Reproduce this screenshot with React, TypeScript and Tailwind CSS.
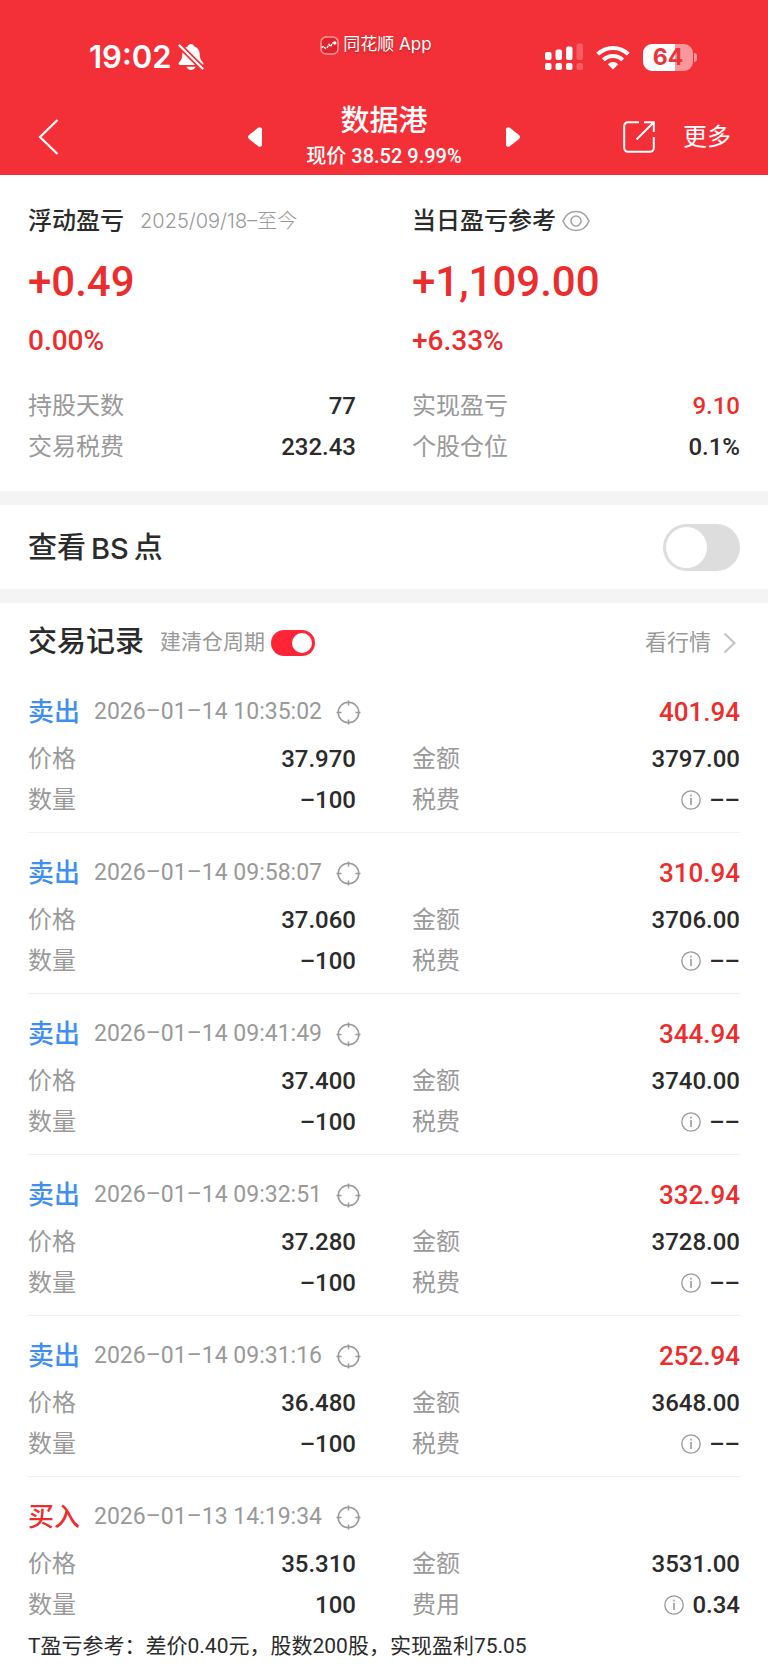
import { useState } from "react";

type Trade = {
  side: "sell" | "buy";
  time: string;
  profit?: string;
  price: string;
  qty: string;
  amount: string;
  feeLabel: string;
  fee: string;
};

const trades: Trade[] = [
  { side: "sell", time: "2026–01–14 10:35:02", profit: "401.94", price: "37.970", qty: "–100", amount: "3797.00", feeLabel: "税费", fee: "––" },
  { side: "sell", time: "2026–01–14 09:58:07", profit: "310.94", price: "37.060", qty: "–100", amount: "3706.00", feeLabel: "税费", fee: "––" },
  { side: "sell", time: "2026–01–14 09:41:49", profit: "344.94", price: "37.400", qty: "–100", amount: "3740.00", feeLabel: "税费", fee: "––" },
  { side: "sell", time: "2026–01–14 09:32:51", profit: "332.94", price: "37.280", qty: "–100", amount: "3728.00", feeLabel: "税费", fee: "––" },
  { side: "sell", time: "2026–01–14 09:31:16", profit: "252.94", price: "36.480", qty: "–100", amount: "3648.00", feeLabel: "税费", fee: "––" },
  { side: "buy", time: "2026–01–13 14:19:34", price: "35.310", qty: "100", amount: "3531.00", feeLabel: "费用", fee: "0.34" },
];

function BellOffIcon() {
  return (
    <svg width="26" height="28" viewBox="0 0 26 28" fill="none">
      <path d="M13 1c-1.600 0-2.700 1-3 2.200C6.200 4.400 4.300 7.300 4.300 11c0 4-.9 6-3.300 8.400-.8 1-.3 2.600 1.100 2.600h21.800c1.400 0 1.900-1.600 1.100-2.600-2.400-2.400-3.300-4.400-3.300-8.400 0-3.700-1.900-6.600-5.700-7.800C15.700 2 14.600 1 13 1z" fill="#fff" />
      <path d="M8.500 23.800h9c-.5 2-2.300 3.200-4.500 3.200s-4-1.200-4.500-3.200z" fill="#fff" />
      <path d="M0 1l26 26" stroke="#f33038" strokeWidth="5.500" />
      <path d="M1.500 2.500l23 23" stroke="#fff" strokeWidth="2.200" strokeLinecap="round" />
    </svg>
  );
}

function SignalIcon() {
  return (
    <svg width="38" height="28" viewBox="0 0 38 28" fill="#fff">
      <rect x="0" y="9" width="6.500" height="8" rx="2" />
      <rect x="10.500" y="6.500" width="6.500" height="10.500" rx="2" />
      <rect x="21" y="3.500" width="6.500" height="13.500" rx="2" />
      <rect x="31.500" y="0.500" width="6.500" height="16.500" rx="2" opacity=".22" />
      <rect x="0" y="20" width="6.500" height="7" rx="2" />
      <rect x="10.500" y="20" width="6.500" height="7" rx="2" />
      <rect x="21" y="20" width="6.500" height="7" rx="2" />
      <rect x="31.500" y="20" width="6.500" height="7" rx="2" opacity=".22" />
    </svg>
  );
}

function WifiIcon() {
  return (
    <svg width="34" height="25" viewBox="0 0 34 25" fill="none" stroke="#fff" strokeWidth="4">
      <path d="M1.700 9.200a21.800 21.800 0 0 1 30.600 0" />
      <path d="M7.300 14.900a13.800 13.800 0 0 1 19.400 0" />
      <path d="M17 24.500l-5.200-5.300a7.400 7.400 0 0 1 10.400 0z" fill="#fff" stroke="none" />
    </svg>
  );
}

function Battery() {
  return (
    <div className="flex items-center gap-px">
      <div className="flex h-[27px] w-[50px] items-center justify-center rounded-[9px] bg-linear-to-r from-white from-64% to-[#f9979b] to-64% font-[Inter,sans-serif] text-[23px] font-bold text-[#e9363d]">
        64
      </div>
      <div className="h-[9px] w-[3px] rounded-r-full bg-[#f9979b]" />
    </div>
  );
}

function AppBadgeIcon() {
  return (
    <svg width="19" height="19" viewBox="0 0 19 19" fill="none">
      <rect x="1" y="1" width="17" height="17" rx="5" fill="#e1222c" stroke="#f8979b" strokeWidth="1.500" />
      <path d="M1.500 11.500l2-1 2 2 2-1.500 1.500-2.500 1.500 2L12 8l1.500-1.500" stroke="#fff" strokeWidth="1.400" strokeDasharray="2.500 .8" />
      <circle cx="14.800" cy="7" r="1.700" fill="#fff" />
    </svg>
  );
}

function TargetIcon() {
  return (
    <svg width="25" height="25" viewBox="0 0 25 25" fill="none" stroke="#999" strokeWidth="1.500">
      <circle cx="12.500" cy="12.500" r="10.300" />
      <path d="M12.500 0.500v5M12.500 19.500v5M0.500 12.500h5M19.500 12.500h5" />
    </svg>
  );
}

function InfoIcon() {
  return (
    <svg width="20" height="20" viewBox="0 0 20 20" fill="none" stroke="#999" strokeWidth="1.300">
      <circle cx="10" cy="10" r="9.200" />
      <path d="M10 8v7" strokeWidth="1.600" />
      <path d="M10 4.800v1.800" strokeWidth="1.600" />
    </svg>
  );
}

function EyeIcon() {
  return (
    <svg width="28" height="22" viewBox="0 0 28 22" fill="none" stroke="#a3a3a3" strokeWidth="1.600">
      <path d="M1 11C3.500 5 8.300 1.500 14 1.500S24.500 5 27 11c-2.500 6-7.300 9.500-13 9.500S3.500 17 1 11z" />
      <circle cx="14" cy="11" r="5" />
    </svg>
  );
}

function Row({ label, value, red, info }: { label: string; value: string; red?: boolean; info?: boolean }) {
  return (
    <div className="flex h-[41px] items-center justify-between">
      <dt className="text-[#999]">{label}</dt>
      <dd className={red ? "font-medium text-[#eb2d2d]" : "flex items-center gap-2 font-medium text-[#2b2b2b]"}>
        {info && <InfoIcon />}
        {value}
      </dd>
    </div>
  );
}

function TradeItem({ trade }: { trade: Trade }) {
  return (
    <li className="border-b border-[#f0f0f0] pt-[14px] pb-3 last:border-b-0 last:pb-0">
      <div className="flex h-[52px] items-center">
        <span className={trade.side === "sell" ? "text-[26px] font-medium text-[#3f8ff0]" : "text-[26px] font-medium text-[#eb2d2d]"}>
          {trade.side === "sell" ? "卖出" : "买入"}
        </span>
        <time className="ml-[14px] text-[23px] text-[#999]">{trade.time}</time>
        <button type="button" aria-label="定位" className="ml-[14px]">
          <TargetIcon />
        </button>
        {trade.profit && <span className="ml-auto text-[26px] font-medium text-[#eb2d2d]">{trade.profit}</span>}
      </div>
      <dl className="grid grid-cols-2 gap-x-14 text-2xl">
        <Row label="价格" value={trade.price} />
        <Row label="金额" value={trade.amount} />
        <Row label="数量" value={trade.qty} />
        <Row label={trade.feeLabel} value={trade.fee} info />
      </dl>
    </li>
  );
}

export default function App() {
  const [showBs, setShowBs] = useState(false);
  const [cycle, setCycle] = useState(true);

  return (
    <div className="min-h-screen bg-white font-[Roboto,'Noto_Sans_CJK_SC',sans-serif] text-[#2b2b2b]">
      <header className="bg-[#f33038] pb-[3px] text-white">
        {/* status bar */}
        <div className="grid h-[102px] grid-cols-[1fr_auto_1fr] items-start px-[71px] pt-9">
          <div className="flex h-[42px] items-center gap-[6px] pl-[18px] font-[Inter,sans-serif] text-[31px] font-semibold">
            19:02
            <BellOffIcon />
          </div>
          <div className="mr-4 flex h-[18px] items-center gap-1 font-[Inter,'Noto_Sans_CJK_SC',sans-serif] text-[17px] text-shadow-md">
            <AppBadgeIcon />
            <span>同花顺 App</span>
          </div>
          <div className="flex h-[42px] items-center justify-end gap-[13px]">
            <SignalIcon />
            <WifiIcon />
            <Battery />
          </div>
        </div>

        {/* nav bar */}
        <div className="grid h-[70px] grid-cols-[1fr_272px_1fr] items-center px-[37px]">
          <button type="button" aria-label="返回" className="justify-self-start">
            <svg width="22" height="38" viewBox="0 0 22 38" fill="none" stroke="#fff" strokeWidth="2.200">
              <path d="M20.500 2L3 19l17.500 17" />
            </svg>
          </button>
          <div className="flex items-center justify-between">
            <button type="button" aria-label="上一只">
              <svg width="14" height="20" viewBox="0 0 14 20" fill="#fff">
                <path d="M10.500 .6L1 8c-1.300 1.100-1.300 2.900 0 4l9.500 7.400c1.600 1.100 3.500.2 3.500-1.800V2.400c0-2-1.900-2.900-3.500-1.800z" />
              </svg>
            </button>
            <div className="text-center">
              <h1 className="text-[29px] leading-[38px] font-medium">数据港</h1>
              <p className="text-xl leading-8 font-medium">现价 38.52 9.99%</p>
            </div>
            <button type="button" aria-label="下一只">
              <svg width="14" height="20" viewBox="0 0 14 20" fill="#fff">
                <path d="M3.500 .6L13 8c1.300 1.100 1.300 2.900 0 4l-9.500 7.400C1.900 20.500 0 19.600 0 17.600V2.400C0 .4 1.900-.5 3.500.6z" />
              </svg>
            </button>
          </div>
          <div className="flex items-center justify-end gap-7">
            <button type="button" aria-label="分享">
              <svg width="32" height="32" viewBox="0 0 32 32" fill="none" stroke="#fff" strokeWidth="2">
                <path d="M16 1.200H5a3.800 3.800 0 0 0-3.800 3.800v22A3.800 3.800 0 0 0 5 30.800h22a3.800 3.800 0 0 0 3.800-3.800V16" />
                <path d="M21 1.200h9.800V11M30.500 1.500L13.500 18.500" />
              </svg>
            </button>
            <button type="button" className="text-2xl">更多</button>
          </div>
        </div>
      </header>

      <main>
        <section className="grid grid-cols-2 gap-x-14 px-7 pt-[26px] pb-6">
          <div>
            <div className="flex h-10 items-center gap-4">
              <h2 className="text-2xl font-medium">浮动盈亏</h2>
              <span className="font-[Inter,'Noto_Sans_CJK_SC',sans-serif] text-xl font-light text-[#999]">2025/09/18–至今</span>
            </div>
            <p className="flex h-20 items-center text-[42px] font-medium text-[#eb2d2d]">+0.49</p>
            <p className="flex h-10 items-center text-[28px] font-medium text-[#eb2d2d]">0.00%</p>
            <dl className="mt-6 text-2xl">
              <Row label="持股天数" value="77" />
              <Row label="交易税费" value="232.43" />
            </dl>
          </div>
          <div>
            <div className="flex h-10 items-center gap-[6px]">
              <h2 className="text-2xl font-medium">当日盈亏参考</h2>
              <button type="button" aria-label="隐藏金额">
                <EyeIcon />
              </button>
            </div>
            <p className="flex h-20 items-center text-[42px] font-medium text-[#eb2d2d]">+1,109.00</p>
            <p className="flex h-10 items-center text-[28px] font-medium text-[#eb2d2d]">+6.33%</p>
            <dl className="mt-6 text-2xl">
              <Row label="实现盈亏" value="9.10" red />
              <Row label="个股仓位" value="0.1%" />
            </dl>
          </div>
        </section>

        <section className="flex h-[112px] items-center justify-between border-y-[14px] border-[#f4f4f4] px-7">
          <label htmlFor="bs" className="flex items-center gap-[5px] pt-1 text-[29px] font-medium">
            查看
            <span className="font-[Inter,sans-serif]">BS</span>
            点
          </label>
          <input
            id="bs"
            type="checkbox"
            role="switch"
            checked={showBs}
            onChange={(e) => setShowBs(e.target.checked)}
            className="h-[47px] w-[77px] appearance-none rounded-full bg-[#ddd] p-[3px] before:block before:size-[41px] before:rounded-full before:bg-white checked:bg-[#ff2436] checked:before:translate-x-[30px]"
          />
        </section>

        <section className="px-7 pb-5">
          <div className="flex h-[69px] items-center pt-[10px]">
            <h2 className="text-[29px] font-medium">交易记录</h2>
            <label htmlFor="cycle" className="ml-4 text-[21px] text-[#999]">建清仓周期</label>
            <input
              id="cycle"
              type="checkbox"
              role="switch"
              checked={cycle}
              onChange={(e) => setCycle(e.target.checked)}
              className="ml-[6px] h-[26px] w-11 appearance-none rounded-full bg-[#ddd] p-[3px] before:block before:size-5 before:rounded-full before:bg-white checked:bg-[#ff2436] checked:before:translate-x-[18px]"
            />
            <a href="#quote" className="ml-auto flex items-center gap-3 pr-1 text-[22px] text-[#999]">
              看行情
              <svg width="13" height="22" viewBox="0 0 13 22" fill="none" stroke="#c4c4c4" strokeWidth="2">
                <path d="M1.500 1.500L11.500 11l-10 9.500" />
              </svg>
            </a>
          </div>

          <ul>
            {trades.map((trade) => (
              <TradeItem key={trade.time} trade={trade} />
            ))}
          </ul>

          <p className="text-[21px] leading-[42px]">
            T盈亏参考：差价0.40元，股数200股，实现盈利75.05
          </p>
        </section>
      </main>
    </div>
  );
}
